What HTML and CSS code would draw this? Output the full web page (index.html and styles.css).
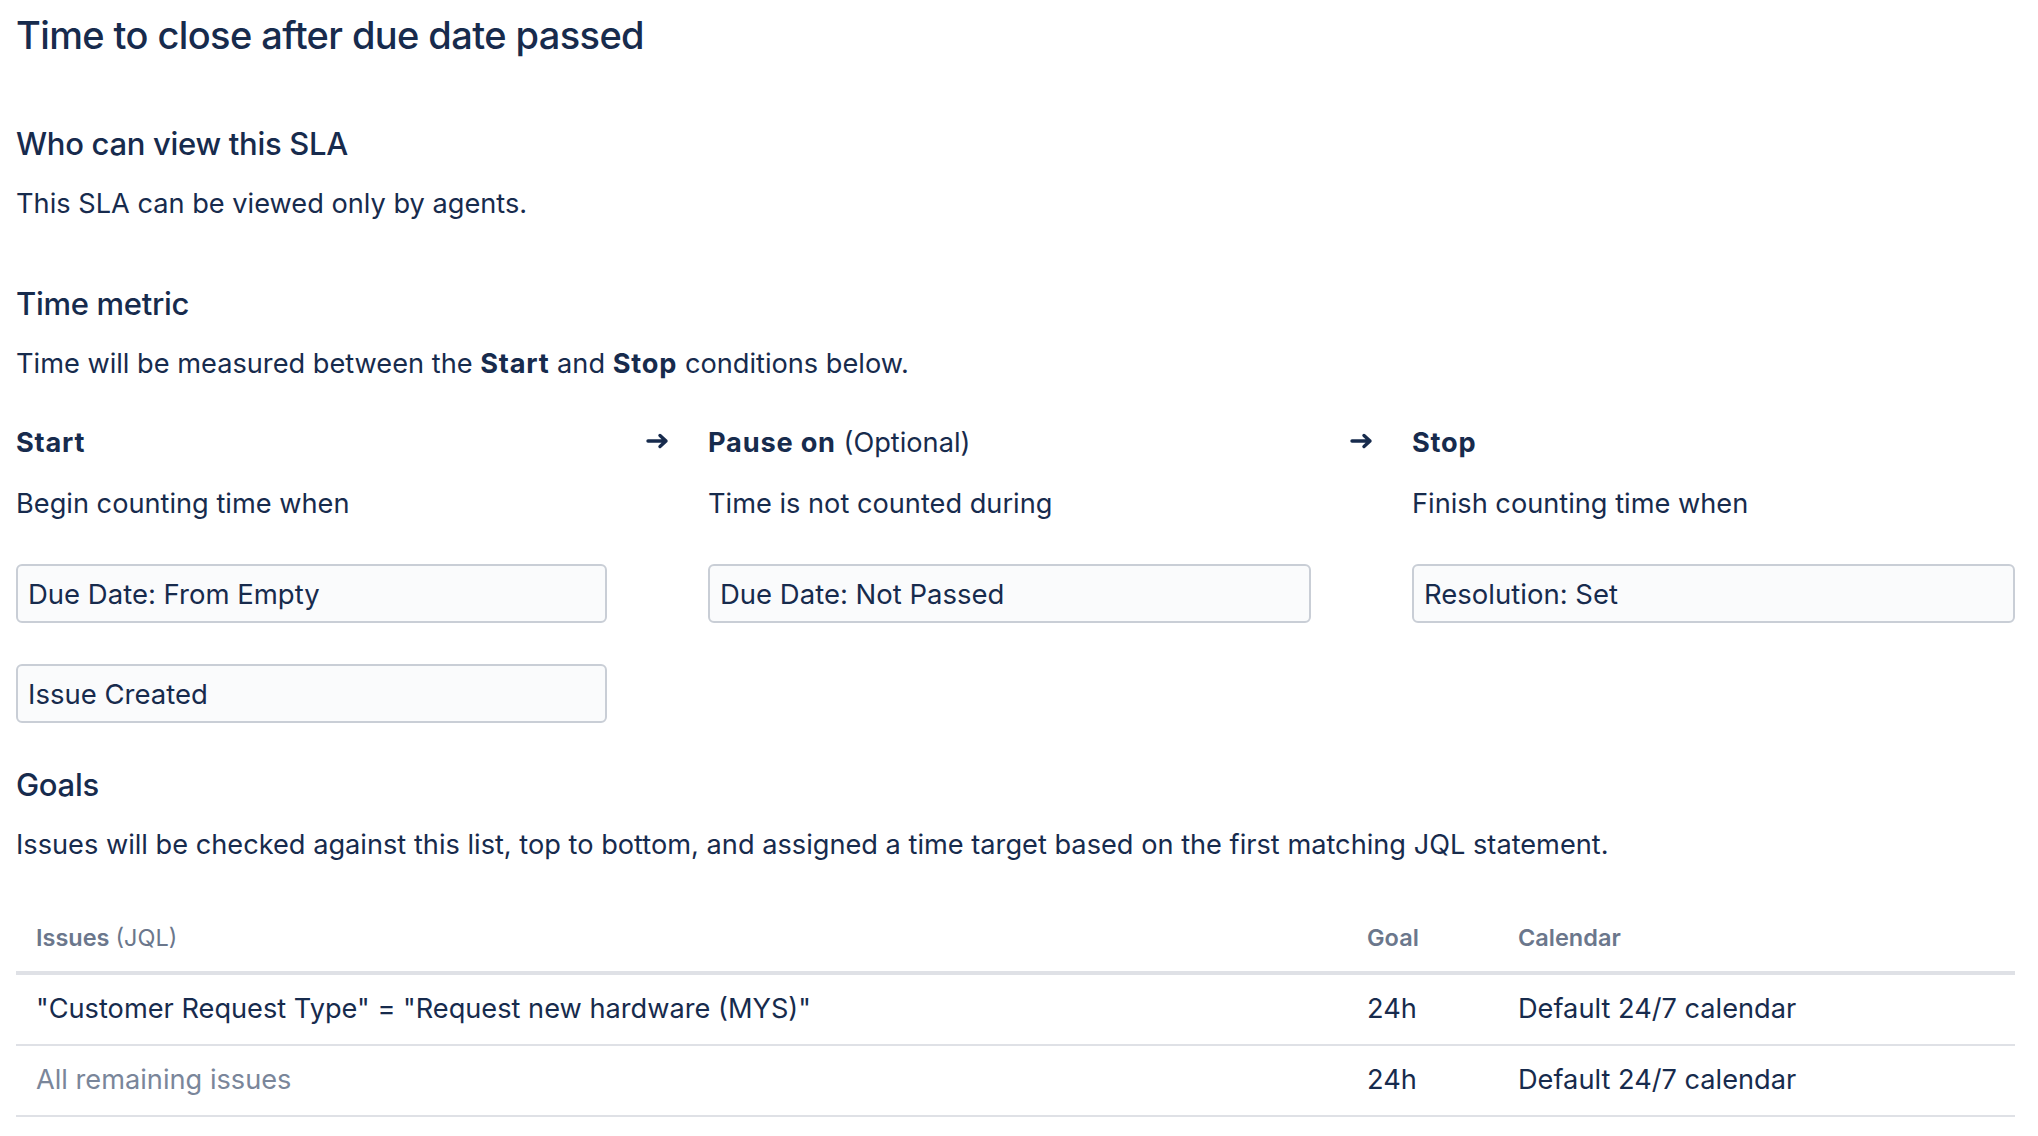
FILE: index.html
```html
<!DOCTYPE html>
<html lang="en">
<head>
<meta charset="utf-8">
<title>Time to close after due date passed</title>
<link rel="stylesheet" href="styles.css">
</head>
<body>
<main class="page">
  <h1 class="title">Time to close after due date passed</h1>

  <section class="section section-view">
    <h2 class="heading">Who can view this SLA</h2>
    <p class="text">This SLA can be viewed only by agents.</p>
  </section>

  <section class="section section-metric">
    <h2 class="heading">Time metric</h2>
    <p class="text">Time will be measured between the <strong>Start</strong> and <strong>Stop</strong> conditions below.</p>

    <div class="conditions">
      <div class="cond">
        <div class="cond-label"><strong>Start</strong></div>
        <div class="cond-desc">Begin counting time when</div>
        <div class="boxes">
          <div class="box">Due Date: From Empty</div>
          <div class="box">Issue Created</div>
        </div>
      </div>
      <div class="arrow-col">
        <svg class="arrow" viewBox="0 0 24 16" width="24" height="16"><path d="M2 8H20M14 2.5L20 8L14 13.5" fill="none" stroke="#172B4D" stroke-width="3.4" stroke-linecap="round" stroke-linejoin="round"/></svg>
      </div>
      <div class="cond">
        <div class="cond-label"><strong>Pause on</strong> (Optional)</div>
        <div class="cond-desc">Time is not counted during</div>
        <div class="boxes">
          <div class="box">Due Date: Not Passed</div>
        </div>
      </div>
      <div class="arrow-col">
        <svg class="arrow" viewBox="0 0 24 16" width="24" height="16"><path d="M2 8H20M14 2.5L20 8L14 13.5" fill="none" stroke="#172B4D" stroke-width="3.4" stroke-linecap="round" stroke-linejoin="round"/></svg>
      </div>
      <div class="cond">
        <div class="cond-label"><strong>Stop</strong></div>
        <div class="cond-desc">Finish counting time when</div>
        <div class="boxes">
          <div class="box">Resolution: Set</div>
        </div>
      </div>
    </div>
  </section>

  <section class="section section-goals">
    <h2 class="heading">Goals</h2>
    <p class="text">Issues will be checked against this list, top to bottom, and assigned a time target based on the first matching JQL statement.</p>

    <table class="goals">
      <thead>
        <tr>
          <th class="col-issues"><strong>Issues</strong> <span class="muted-normal">(JQL)</span></th>
          <th class="col-goal">Goal</th>
          <th class="col-cal">Calendar</th>
        </tr>
      </thead>
      <tbody>
        <tr>
          <td>"Customer Request Type" = "Request new hardware (MYS)"</td>
          <td>24h</td>
          <td>Default 24/7 calendar</td>
        </tr>
        <tr>
          <td class="muted">All remaining issues</td>
          <td>24h</td>
          <td>Default 24/7 calendar</td>
        </tr>
      </tbody>
    </table>
  </section>
</main>
</body>
</html>
```

FILE: styles.css
```css
* { box-sizing: border-box; }

html, body {
  margin: 0;
  padding: 0;
  background: #ffffff;
}

body {
  font-family: "Inter", "Noto Sans", "Liberation Sans", sans-serif;
  color: #172B4D;
}

.page {
  padding: 0 23px 0 16px;
}

.title {
  margin: 12px 0 0;
  font-size: 38px;
  line-height: 46px;
  font-weight: 500;
  letter-spacing: -0.6px;
}

.heading {
  margin: 0;
  font-size: 31px;
  line-height: 40px;
  font-weight: 500;
  letter-spacing: -0.3px;
}

.text {
  margin: 20px 0 0;
  font-size: 27.2px;
  line-height: 40px;
}

.text strong,
.cond-label strong {
  font-weight: 700;
  letter-spacing: 0.8px;
}

.section-view { margin-top: 66px; }
.section-metric { margin-top: 60px; }
.section-goals { margin-top: 42px; }

.conditions {
  margin-top: 39px;
  display: grid;
  grid-template-columns: minmax(0, 591fr) 101px minmax(0, 603fr) 101px minmax(0, 603fr);
  align-items: start;
}

.cond-label {
  font-size: 27.2px;
  line-height: 40px;
}

.cond-desc {
  margin-top: 21px;
  font-size: 27.2px;
  line-height: 40px;
}

.boxes {
  margin-top: 40px;
  display: flex;
  flex-direction: column;
  gap: 41px;
}

.box {
  height: 59px;
  display: flex;
  align-items: center;
  padding: 0 10px;
  font-size: 27.5px;
  background: #FAFBFC;
  border: 2px solid #C9CED6;
  border-radius: 6px;
}

.arrow-col {
  display: flex;
  justify-content: center;
  padding-top: 10px;
}

.arrow { display: block; }

.goals {
  margin-top: 57px;
  width: 100%;
  border-collapse: collapse;
  table-layout: fixed;
}

.goals th {
  text-align: left;
  font-size: 23.5px;
  line-height: 32px;
  font-weight: 600;
  color: #6B778C;
  padding: 0 20px 17px;
  border-bottom: 4px solid #DFE1E6;
}

.goals th strong { font-weight: 600; }
.goals th .muted-normal { font-weight: 400; }

.goals .col-issues { width: auto; }
.goals .col-goal { width: 151px; }
.goals .col-cal { width: 517px; }

.goals td {
  font-size: 27.2px;
  line-height: 40px;
  padding: 14px 20px 15px;
  border-bottom: 2px solid #DFE1E6;
  vertical-align: middle;
}

.goals td.muted { color: #7A869A; }
```
